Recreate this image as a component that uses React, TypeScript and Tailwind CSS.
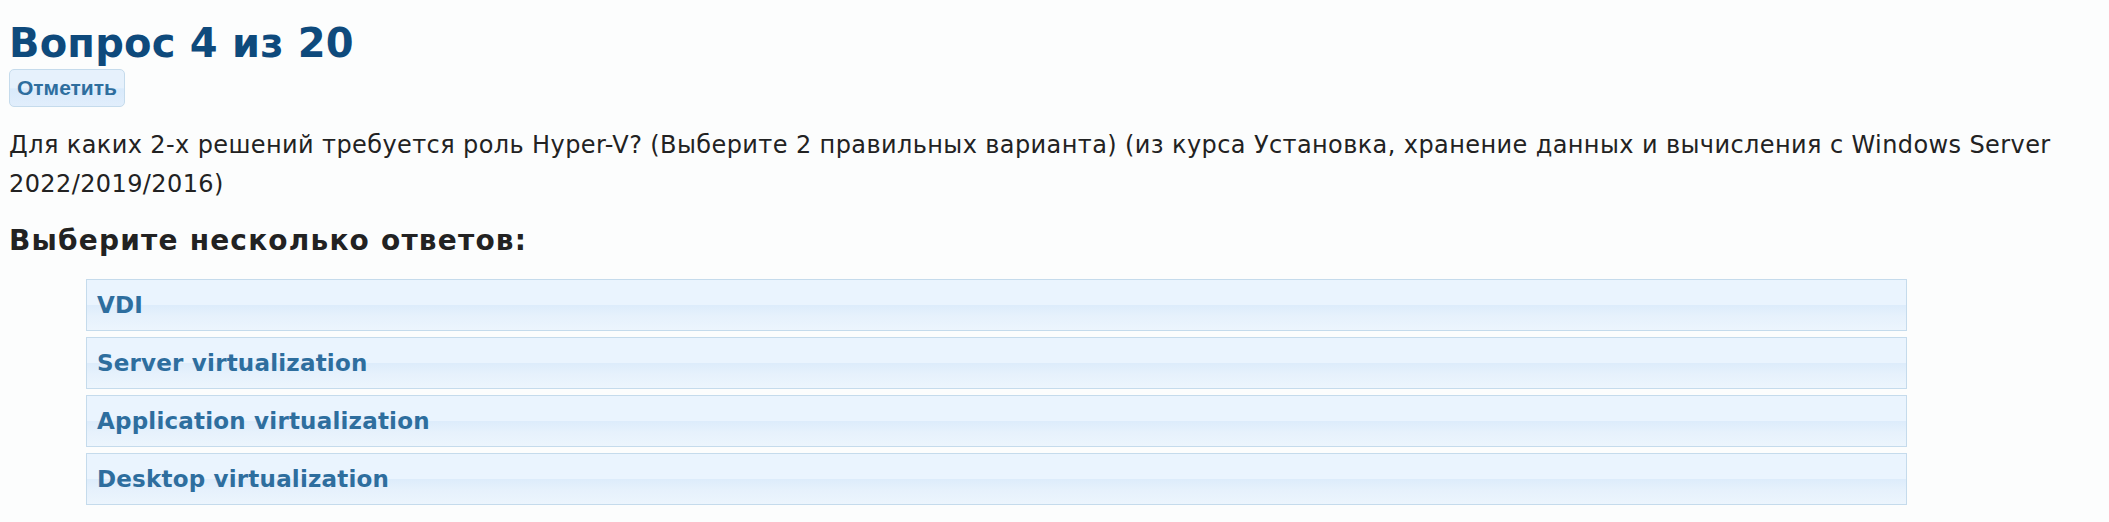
import React from "react";

const options = ["VDI", "Server virtualization", "Application virtualization", "Desktop virtualization"];

export default function App() {
  return (
    <div className="min-h-[522px] w-full bg-[#fcfdfd] px-[9px] pt-[20px] font-['DejaVu_Sans',sans-serif]">
      <h1 className="m-0 text-[40px] leading-[46px] font-bold tracking-[0.2px] text-[#0e4a7c]">
        Вопрос 4 из 20
      </h1>
      <button className="mt-[3px] flex h-[38px] items-center rounded-[5px] border border-[#c5dbec] bg-[linear-gradient(to_bottom,#e6f1fc_0%,#e6f1fc_50%,#d9eafb_52%,#e1eefc_100%)] px-[7px] font-['Liberation_Sans',Arial,sans-serif] text-[21px] font-bold text-[#2e6e9e]">
        Отметить
      </button>
      <p className="mt-[19px] text-[24px] leading-[39px] tracking-[0.4px] text-[#222]">
        Для каких 2-х решений требуется роль Hyper-V? (Выберите 2 правильных варианта) (из курса Установка, хранение данных и вычисления с Windows Server 2022/2019/2016)
      </p>
      <h2 className="mt-[21px] text-[28px] leading-[32px] font-bold tracking-[1.2px] text-[#222]">Выберите несколько ответов:</h2>
      <ul className="ml-[77px] mt-[22px] flex w-[1821px] flex-col gap-[6px]">
        {options.map((o) => (
          <li
            key={o}
            className="flex h-[52px] items-center border border-[#c5dbec] bg-[linear-gradient(to_bottom,#eaf4fe_0%,#eaf4fe_49%,#ddecfb_51%,#e6f1fc_72%,#ecf5fd_100%)] px-[10px] text-[23px] font-bold tracking-[0.2px] text-[#2e6e9e]"
          >
            {o}
          </li>
        ))}
      </ul>
    </div>
  );
}
